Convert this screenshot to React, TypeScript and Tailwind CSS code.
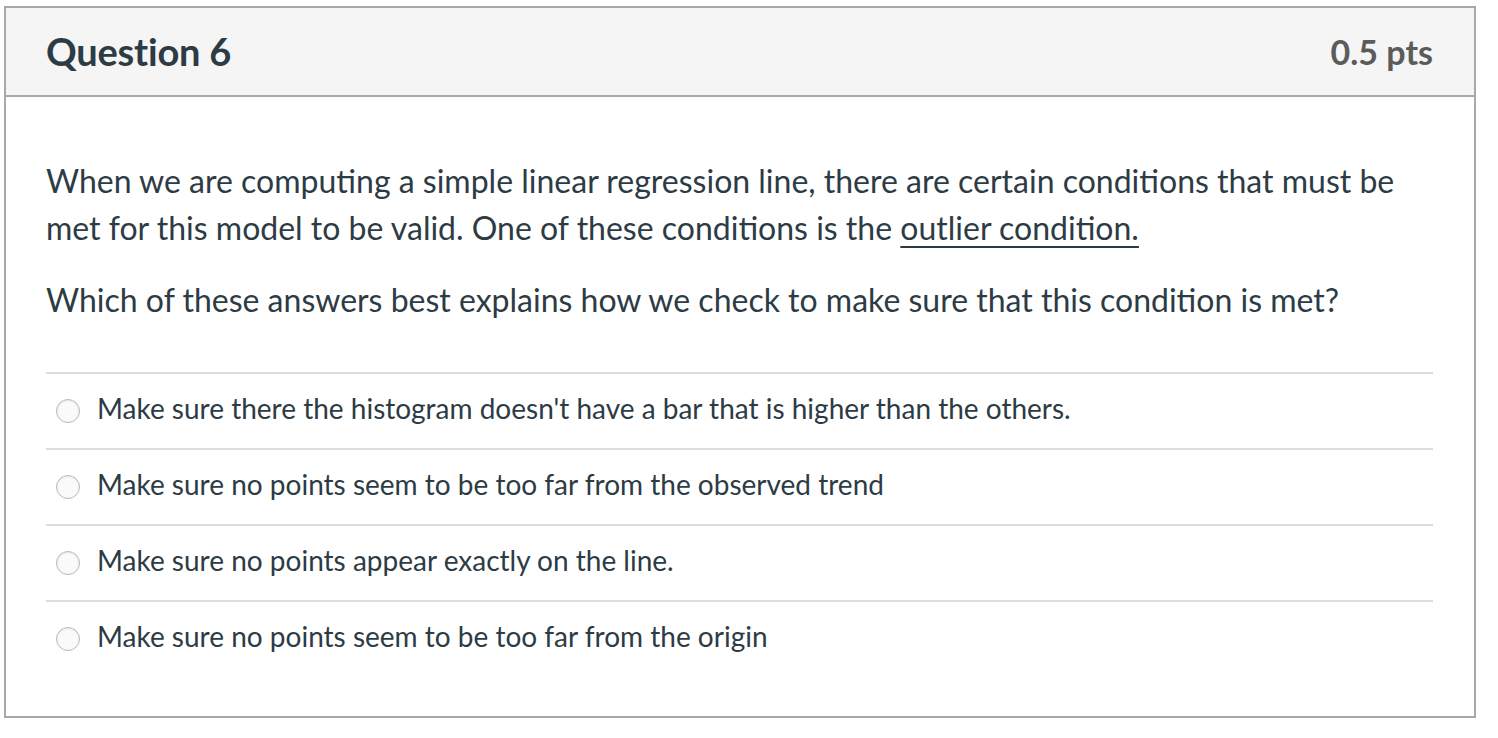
import React from "react";

const ANSWERS = [
  "Make sure there the histogram doesn't have a bar that is higher than the others.",
  "Make sure no points seem to be too far from the observed trend",
  "Make sure no points appear exactly on the line.",
  "Make sure no points seem to be too far from the origin",
];

export default function App() {
  return (
    <div className="w-[1498px] h-[738px] bg-white pt-[6px] pl-[4px] font-['Lato','Liberation_Sans',sans-serif]">
      <div className="w-[1472px] border-2 border-[#a8a8a8] bg-white">
        {/* header */}
        <div className="h-[89px] flex items-center justify-between px-[40px] bg-[#f5f5f5] border-b-2 border-[#a8a8a8]">
          <h2 className="text-[38px] font-bold text-[#2d3b45] tracking-[-0.2px]">Question 6</h2>
          <span className="text-[34px] font-bold text-[#5b5b5b] mr-[1px]">0.5 pts</span>
        </div>

        {/* body */}
        <div className="px-[40px] pt-[60px] pb-[40px] text-[#2d3b45]">
          <p className="text-[32px] leading-[47px]">
            When we are computing a simple linear regression line, there are certain conditions that must be
            met for this model to be valid. One of these conditions is the{" "}
            <span className="underline underline-offset-[6px] decoration-[1.5px]">outlier condition.</span>
          </p>
          <p className="text-[32px] leading-[47px] mt-[25px]">
            Which of these answers best explains how we check to make sure that this condition is met?
          </p>

          <div className="mt-[49px] mr-[1px]">
            {ANSWERS.map((a, i) => (
              <div key={i} className="h-[76px] flex items-center border-t-2 border-[#dcdcdc]">
                <span className="ml-[10px] w-[24px] h-[24px] shrink-0 rounded-full border border-[#b8b8b8] bg-[#fafafa] shadow-[inset_0_1px_2px_rgba(0,0,0,0.08)]" />
                <span className="ml-[17px] mb-[6px] text-[28px] text-[#2d3b45]">{a}</span>
              </div>
            ))}
          </div>
        </div>
      </div>
    </div>
  );
}
